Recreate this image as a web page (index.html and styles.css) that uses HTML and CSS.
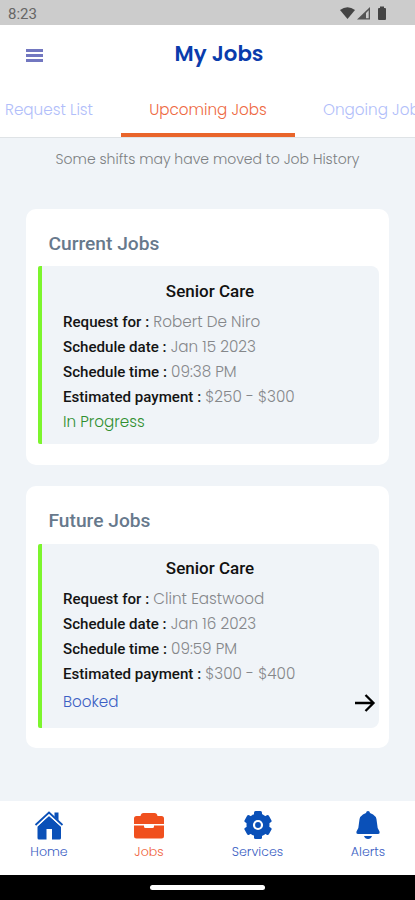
FILE: index.html
```html
<!DOCTYPE html>
<html lang="en">
<head>
  <meta charset="UTF-8" />
  <meta name="viewport" content="width=device-width, initial-scale=1.0" />
  <title>My Jobs</title>
  <link rel="stylesheet" href="styles.css">
</head>
<body>
  <div class="status-bar">
    <span class="clock">8:23</span>
    <svg class="status-icons" width="48" height="16" viewBox="0 0 48 16">
      <path fill="#444" d="M0 4 Q7.500 -1.500 15 4 L7.500 13 Z" />
      <path fill="#555" d="M17 13.500 L30 1 V13.500 Z" />
      <path fill="#ccc" d="M26 7 L28.700 4.300 V12.300 H26 Z" />
      <path fill="#444" d="M40 0.500 h4 v1.500 h1 q1 0 1 1 v10 q0 1 -1 1 h-6 q-1 0 -1 -1 v-10 q0 -1 1 -1 h1 Z" />
    </svg>
  </div>

  <header class="header">
    <button class="menu-btn" aria-label="Menu"><span></span><span></span><span></span></button>
    <h1>My Jobs</h1>
  </header>

  <nav class="tabs">
    <a class="tab request">Request List</a>
    <a class="tab active">Upcoming Jobs</a>
    <a class="tab ongoing">Ongoing Jobs</a>
  </nav>

  <main>
    <p class="notice">Some shifts may have moved to Job History</p>

    <section class="card">
      <h2>Current Jobs</h2>
      <div class="job">
        <h3>Senior Care</h3>
        <p><strong>Request for :</strong> <span>Robert De Niro</span></p>
        <p><strong>Schedule date :</strong> <span>Jan 15 2023</span></p>
        <p><strong>Schedule time :</strong> <span>09:38 PM</span></p>
        <p><strong>Estimated payment :</strong> <span>$250 - $300</span></p>
        <p class="progress">In Progress</p>
      </div>
    </section>

    <section class="card future">
      <h2>Future Jobs</h2>
      <div class="job">
        <h3>Senior Care</h3>
        <p><strong>Request for :</strong> <span>Clint Eastwood</span></p>
        <p><strong>Schedule date :</strong> <span>Jan 16 2023</span></p>
        <p><strong>Schedule time :</strong> <span>09:59 PM</span></p>
        <p><strong>Estimated payment :</strong> <span>$300 - $400</span></p>
        <div class="job-footer">
          <span class="booked">Booked</span>
          <svg width="22" height="20" viewBox="0 0 22 20" fill="none" stroke="#000" stroke-width="2.300">
            <path d="M1 10 H19.500 M11.500 2 L19.500 10 L11.500 18" />
          </svg>
        </div>
      </div>
    </section>
  </main>

  <nav class="bottom-nav">
    <a class="nav-item home">
      <svg width="30" height="30" viewBox="0 0 30 30" fill="#0a50b8">
        <path d="M15 6 L27 16.500 V28 q0 1.500 -1.500 1.500 H18 V19 H12.500 V29.500 H5 Q3.500 29.500 3.500 28 V16.500 Z" />
        <path d="M20.500 2.500 h4 v8 L20.500 7 Z" />
        <path d="M1.500 15 L15 2.500 L28.500 15" fill="none" stroke="#0a50b8" stroke-width="1.800" />
        <path d="M2.800 16.500 L15 5.300 L27.200 16.500" fill="none" stroke="#fff" stroke-width="1" />
      </svg>
      <span>Home</span>
    </a>
    <a class="nav-item jobs">
      <svg width="30" height="30" viewBox="0 0 30 30" fill="#f0501e">
        <path d="M0 14 V8.500 Q0 6 2.500 6 H6.500 Q7 3 9.500 3 H20.500 Q23 3 23.500 6 H27.500 Q30 6 30 8.500 V14 Z" />
        <path d="M0 15.500 H10 V16.500 Q10 18 11.500 18 H18.500 Q20 18 20 16.500 V15.500 H30 V26 Q30 28.500 27.500 28.500 H2.500 Q0 28.500 0 26 Z" />
      </svg>
      <span>Jobs</span>
    </a>
    <a class="nav-item services">
      <svg width="30" height="30" viewBox="0 0 30 30">
        <g fill="#0a50b8">
          <circle cx="15" cy="15" r="11.500" />
          <rect x="11" y="1" width="8" height="28" rx="1.500" />
          <rect x="11" y="1" width="8" height="28" rx="1.500" transform="rotate(60 15 15)" />
          <rect x="11" y="1" width="8" height="28" rx="1.500" transform="rotate(120 15 15)" />
        </g>
        <circle cx="15" cy="15" r="4" fill="#0a50b8" stroke="#fff" stroke-width="2.200" />
      </svg>
      <span>Services</span>
    </a>
    <a class="nav-item alerts">
      <svg width="30" height="30" viewBox="0 0 30 30" fill="#0a50b8">
        <path d="M15 1 Q16.800 1 17 3 Q24 5 24 13 Q24 18 26.500 21.500 Q27 24 25 24 H5 Q3 24 3.500 21.500 Q6 18 6 13 Q6 5 13 3 Q13.200 1 15 1 Z" />
        <path d="M11 26 H19 Q18 29 15 29 Q12 29 11 26 Z" />
      </svg>
      <span>Alerts</span>
    </a>
  </nav>

  <div class="gesture-bar"><span></span></div>
</body>
</html>
```
FILE: styles.css
```css
* { box-sizing: border-box; }
body {
  margin: 0;
  height: 900px;
  display: flex;
  flex-direction: column;
  overflow: hidden;
  background: #f0f4f8;
  font-family: Poppins, Inter, sans-serif;
  font-weight: 300;
}
h1, h2, h3, p { margin: 0; }

.status-bar {
  height: 25px;
  flex: none;
  display: flex;
  justify-content: space-between;
  padding: 6px 27px 0 8px;
  background: #ccc;
}
.clock { font: 400 15px/17px Roboto, sans-serif; color: #666; }

.header {
  height: 57px;
  flex: none;
  display: grid;
  grid-template-columns: 43px 1fr 43px;
  align-items: center;
  background: #fff;
}
.menu-btn {
  display: grid;
  gap: 2px;
  width: 17px;
  margin: 3px 0 0 26px;
  padding: 0;
  border: none;
  background: none;
}
.menu-btn span { height: 3px; background: #7277c0; }
h1 { padding-left: 23px; text-align: center; font-size: 21.3px; line-height: 28px; font-weight: 600; color: #0a3cac; }

.tabs {
  height: 55px;
  flex: none;
  display: flex;
  padding-left: 5px;
  overflow: hidden;
  background: #fff;
}
.tab {
  flex: none;
  width: 174px;
  line-height: 56px;
  text-align: center;
  white-space: nowrap;
  font-size: 15.2px;
  color: #b1befa;
}
.tab.request { width: 116px; text-align: left; }
.tab.ongoing { text-align: left; padding-left: 28px; }
.tab.active { color: #ee6841; border-bottom: 4px solid #e9652b; }

main { flex: 1; border-top: 1px solid #dfe3e6; }
.notice { height: 71px; padding-top: 11px; text-align: center; font-size: 14px; line-height: 20px; color: #7c7f82; }

.card {
  width: 363px;
  height: 256px;
  margin: 0 0 21px 26px;
  padding: 23px 10px 0 12px;
  border-radius: 10px;
  background: #fff;
}
.card.future { height: 262px; }
h2 { height: 34px; padding-left: 10.5px; font: 500 19.2px/24px Roboto, sans-serif; color: #67798c; }
.job {
  height: 178px;
  padding: 13px 3px 0 21px;
  border-left: 4px solid #7cf52d;
  border-radius: 2px 8px 8px 2px;
  background: #f0f4f8;
}
.future h2 { height: 35px; }
.future .job { height: 184px; padding-top: 12px; }
h3 { height: 30px; padding-right: 19px; text-align: center; font: 500 17px/24px Roboto, sans-serif; color: #111; }
.job p { height: 25px; line-height: 25px; font-size: 15.2px; white-space: nowrap; color: #85878a; }
.job strong { font: 500 15.1px/25px Roboto, sans-serif; color: #141414; }
.job p.progress { color: #2f8f2f; }
.job-footer { display: flex; justify-content: space-between; align-items: center; height: 34px; }
.booked { margin-top: -3px; font-size: 15.2px; color: #3c5fc4; }

.bottom-nav {
  height: 74px;
  flex: none;
  display: flex;
  overflow: hidden;
  background: #fff;
}
.nav-item {
  flex: none;
  display: flex;
  flex-direction: column;
  align-items: center;
  padding-top: 9px;
  font-size: 12.6px;
  line-height: 24px;
  color: #3c5fc4;
}
.nav-item.home { width: 98px; }
.nav-item.jobs { width: 102px; color: #f0623c; }
.nav-item.services { width: 115px; }
.nav-item.alerts { width: 106px; }

.gesture-bar { height: 25px; flex: none; display: flex; justify-content: center; padding-top: 10px; background: #000; }
.gesture-bar span { width: 115px; height: 5px; border-radius: 3px; background: #fff; }
```
